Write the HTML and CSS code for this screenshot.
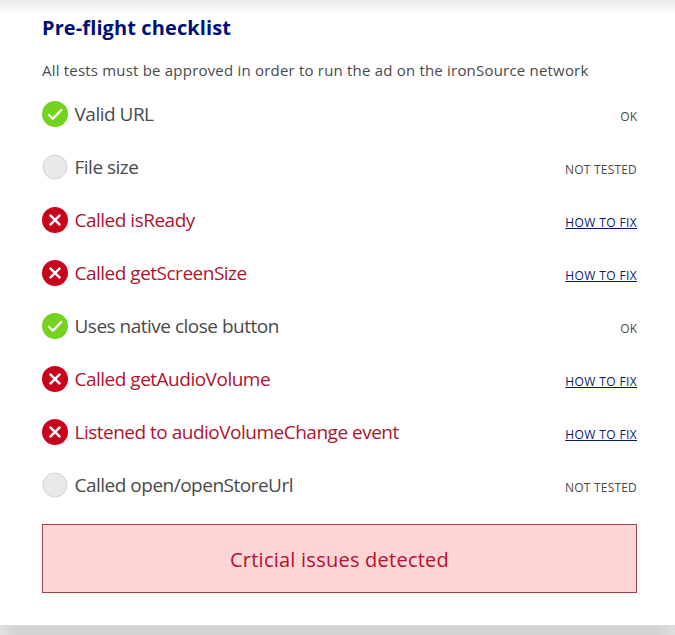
FILE: index.html
```html
<!DOCTYPE html>
<html lang="en">
<head>
<meta charset="utf-8">
<title>Pre-flight checklist</title>
<link rel="stylesheet" href="styles.css">
</head>
<body>
<svg class="defs" aria-hidden="true">
  <symbol id="pass" viewBox="0 0 26 26"><circle cx="13" cy="13" r="13" fill="#74d31f"/><path d="M6.3 13.2l4.6 4.5 9-9.3" fill="none" stroke="#fff" stroke-width="2.3"/></symbol>
  <symbol id="idle" viewBox="0 0 26 26"><circle cx="13" cy="13" r="12" fill="#e9e9e9" stroke="#d3d3d3"/></symbol>
  <symbol id="fail" viewBox="0 0 26 26"><circle cx="13" cy="13" r="13" fill="#ca021b"/><path d="M7.8 7.8l10.4 10.4M18.2 7.8L7.8 18.2" fill="none" stroke="#fff" stroke-width="2.5"/></symbol>
</svg>
<main class="panel">
  <h1 class="title"><span>Pre-flight checklist</span></h1>
  <p class="intro"><span>All tests must be approved in order to run the ad on the ironSource network</span></p>
  <ul class="checks">
    <li class="check"><svg class="icon"><use href="#pass"/></svg><span class="name">Valid URL</span><span class="status">OK</span></li>
    <li class="check"><svg class="icon"><use href="#idle"/></svg><span class="name">File size</span><span class="status untested">NOT TESTED</span></li>
    <li class="check failed"><svg class="icon"><use href="#fail"/></svg><span class="name">Called isReady</span><a class="status" href="#">HOW TO FIX</a></li>
    <li class="check failed"><svg class="icon"><use href="#fail"/></svg><span class="name">Called getScreenSize</span><a class="status" href="#">HOW TO FIX</a></li>
    <li class="check"><svg class="icon"><use href="#pass"/></svg><span class="name">Uses native close button</span><span class="status">OK</span></li>
    <li class="check failed"><svg class="icon"><use href="#fail"/></svg><span class="name">Called getAudioVolume</span><a class="status" href="#">HOW TO FIX</a></li>
    <li class="check failed"><svg class="icon"><use href="#fail"/></svg><span class="name">Listened to audioVolumeChange event</span><a class="status" href="#">HOW TO FIX</a></li>
    <li class="check"><svg class="icon"><use href="#idle"/></svg><span class="name">Called open/openStoreUrl</span><span class="status untested">NOT TESTED</span></li>
  </ul>
  <div class="alert"><span>Crticial issues detected</span></div>
</main>
</body>
</html>
```
FILE: styles.css
```css
* { box-sizing: border-box; }
body {
  margin: 0;
  height: 635px;
  overflow: hidden;
  background: linear-gradient(90deg, #e2e2e2, #d3d3d3 16px, #d3d3d3 655px, #dedede);
  font-family: "Open Sans", "Noto Sans", sans-serif;
  color: #4a4a4a;
}
.defs { position: absolute; width: 0; height: 0; }
.panel {
  height: 626px;
  padding: 12px 38px 0 42px;
  border-bottom: 1px solid #dedede;
  background: linear-gradient(#e9e9e9, #fff 15px);
}
.title {
  margin: 0;
  font-size: 20px;
  line-height: 32px;
  font-weight: 700;
  letter-spacing: 0.11px;
  color: #000f77;
}
.intro {
  margin: 11px 0 0;
  font-size: 15px;
  line-height: 30px;
  letter-spacing: 0.2px;
  white-space: nowrap;
}
.checks { margin: 2px 0 0; padding: 0; list-style: none; }
.check { display: flex; align-items: center; height: 53px; }
.icon { width: 26px; height: 26px; flex: none; }
.name {
  margin-left: 6.5px;
  font-size: 19px;
  line-height: 26px;
  letter-spacing: -0.5px;
  white-space: nowrap;
}
.failed .name { color: #b0132f; }
.status { margin: 6px 0 0 auto; font-size: 12px; line-height: 18px; white-space: nowrap; }
.untested { letter-spacing: 0.2px; }
a.status { color: #0a1a72; letter-spacing: 0.38px; text-decoration: underline; }
.alert {
  display: flex;
  align-items: center;
  justify-content: center;
  height: 69px;
  margin-top: 13px;
  padding-top: 2px;
  border: 1px solid #a5404f;
  background: #ffd5d5;
  color: #b5102c;
  font-size: 20px;
  letter-spacing: 0.24px;
}
```
